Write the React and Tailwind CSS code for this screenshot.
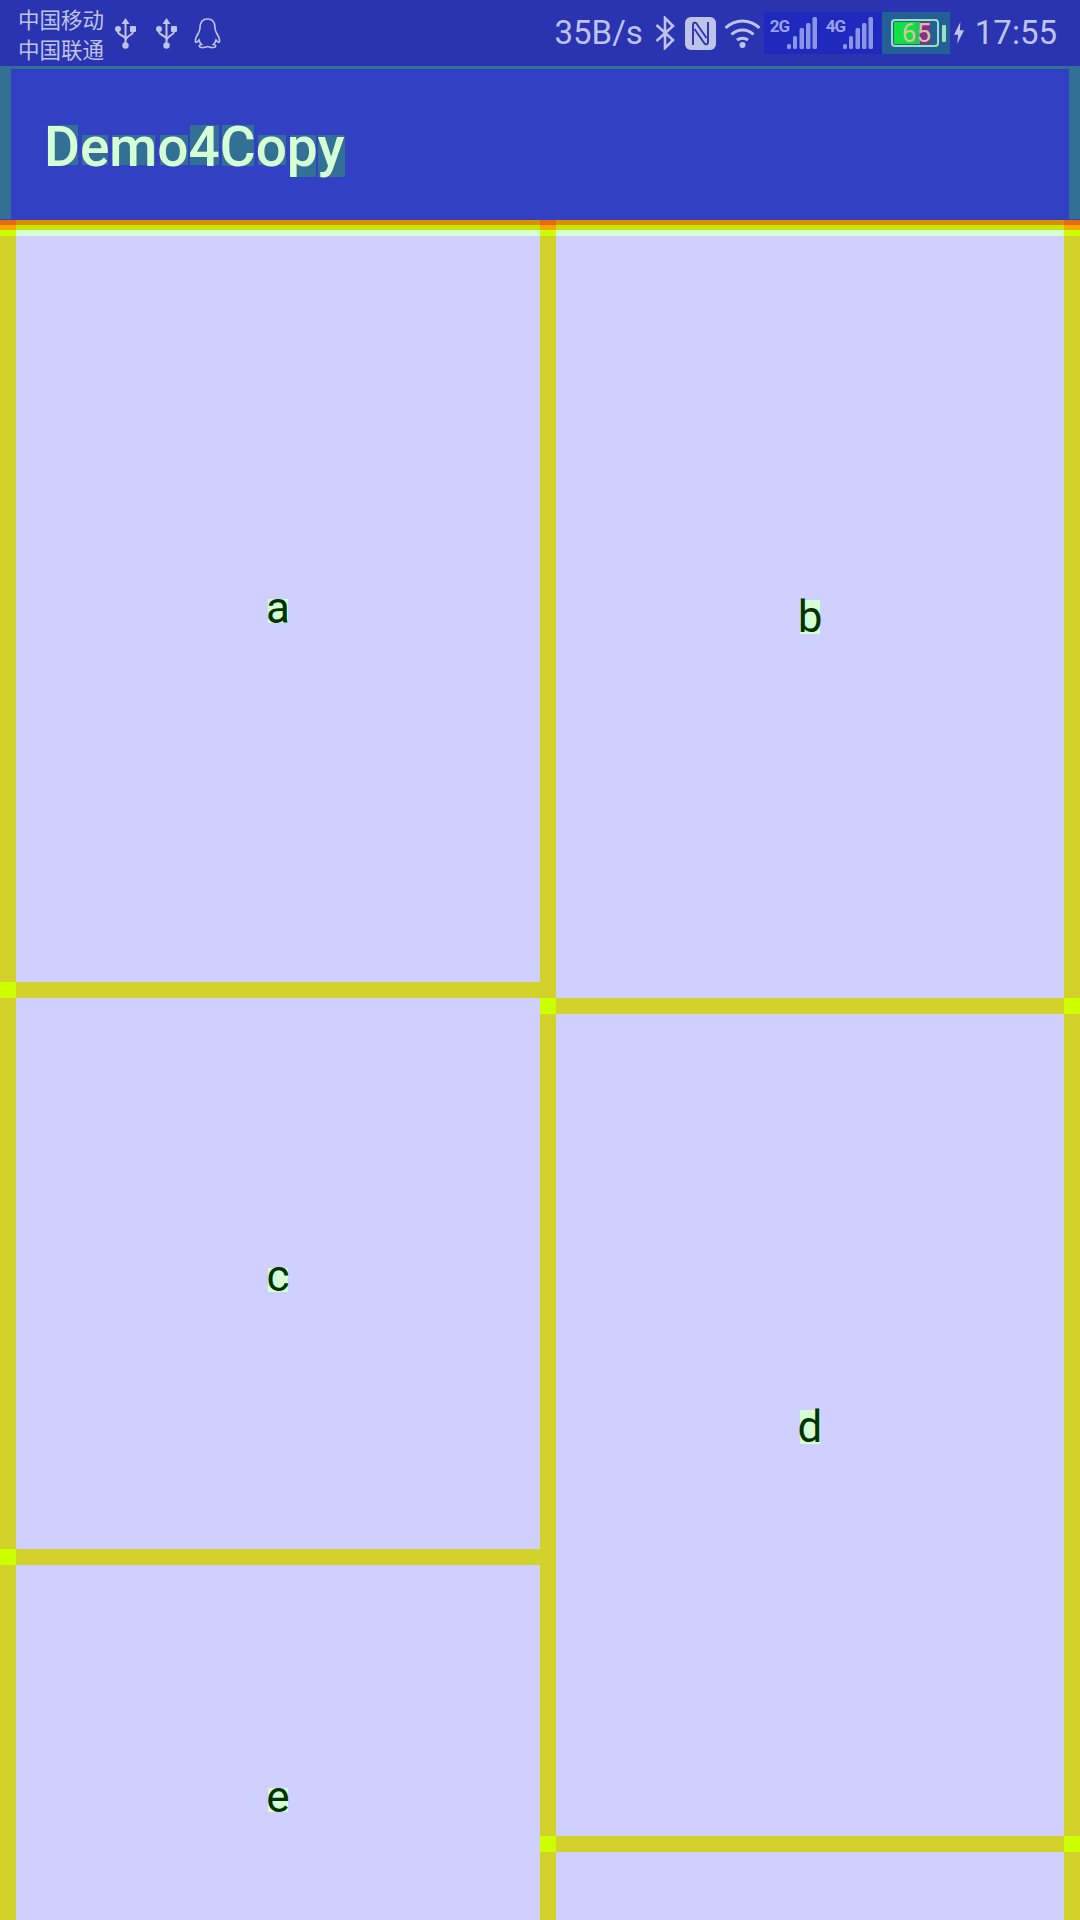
import React from "react";

const UsbIcon = () => (
  <svg width="21" height="31" viewBox="0 0 21 31" fill="none" className="shrink-0">
    <path d="M10.5 0L6.5 6H14.5Z" fill="#bec3ea" />
    <path d="M10.5 5V27M3 11V14C3 17 10.5 18 10.5 21M18 11V14C18 17 10.5 18 10.5 23" stroke="#bec3ea" strokeWidth="2" />
    <circle cx="10.5" cy="27.5" r="3.2" fill="#bec3ea" />
    <circle cx="3" cy="11" r="3" fill="#bec3ea" />
    <rect x="15" y="8" width="6" height="6" rx="1" fill="#bec3ea" />
  </svg>
);

const QqIcon = () => (
  <svg width="27" height="31" viewBox="0 0 27 31" fill="none" className="shrink-0">
    <path
      d="M13.5 1C8 1 6 5 6 10C6 12 5.5 13 4.5 15C2.5 18 1 21 1.5 24C2 25 3.5 24 5 22C5.5 24 6 25.5 7.5 26.5C5.5 27 4.5 28 6 29C8 30 11 29.5 13.5 28.5C16 29.5 19 30 21 29C22.5 28 21.5 27 19.5 26.5C21 25.5 21.5 24 22 22C23.5 24 25 25 25.5 24C26 21 24.5 18 22.5 15C21.5 13 21 12 21 10C21 5 19 1 13.5 1Z"
      stroke="#bec3ea"
      strokeWidth="1.6"
    />
  </svg>
);

const BluetoothIcon = () => (
  <svg width="20" height="34" viewBox="0 0 20 34" fill="none" className="shrink-0">
    <path d="M1.5 9L18 24L10 32V2L18 10L1.5 25" stroke="#bec3ea" strokeWidth="2.6" />
  </svg>
);

const NfcIcon = () => (
  <svg width="31" height="33" viewBox="0 0 31 33" fill="none" className="shrink-0">
    <rect width="31" height="33" rx="6" fill="#bec3ea" />
    <path d="M8 28V8C8 5.5 10 5 11.5 6.5L21.5 21" stroke="#2a33b0" strokeWidth="1.9" />
    <path d="M23 5V25C23 27.5 21 28 19.5 26.5L9.5 12" stroke="#2a33b0" strokeWidth="1.9" />
  </svg>
);

const WifiIcon = () => (
  <svg width="37" height="30" viewBox="0 0 37 30" fill="none" className="shrink-0">
    <path d="M1.5 10C11 0.5 26 0.5 35.5 10M7.5 16.5C14 10.5 23 10.5 29.5 16.5M13 22C16 19.5 21 19.5 24 22" stroke="#bec3ea" strokeWidth="3" />
    <circle cx="18.5" cy="27" r="3" fill="#bec3ea" />
  </svg>
);

const SignalBars = () => (
  <svg width="30" height="32" viewBox="0 0 30 32" fill="#8c94e8" className="shrink-0">
    <rect x="0" y="27" width="4" height="5" rx="1.5" />
    <rect x="6" y="19" width="4" height="13" rx="1.5" />
    <rect x="12.5" y="11" width="4.5" height="21" rx="1.5" />
    <rect x="19" y="6" width="4.5" height="26" rx="1.5" />
    <rect x="25.5" y="0" width="4.5" height="32" rx="1.5" />
  </svg>
);

const Bolt = () => (
  <svg width="10" height="24" viewBox="0 0 11 24" fill="#bec3ea" className="shrink-0">
    <path d="M7 0L0 14H4.5L3.5 24L11 9H6.5Z" />
  </svg>
);

const Signal = ({ label }) => (
  <div className="flex w-[58px] h-[42px] items-end pb-[5px]">
    <span className="w-[17px] self-start mt-[5px] text-[17px] leading-[18px] font-bold text-[#9aa1ec] tracking-[-1px]">
      {label}
    </span>
    <SignalBars />
  </div>
);

const Battery = () => (
  <div className="flex items-center w-[68px] h-[42px] bg-[#236095] pl-[9px]">
    <div className="relative w-[48px] h-[28px] border-2 border-[#a0dcc0] rounded-[4px] p-[1px] flex">
      <div className="w-[21px] bg-[#10e040]" />
      <div className="w-[5px] bg-[#2fc060]" />
      <div className="w-[10px] bg-[#8a2c8c]" />
      <span className="absolute left-[9px] top-0 text-[26px] leading-[24px] text-[#d2c6a0]">65</span>
    </div>
    <div className="ml-[3px] w-[4px] h-[17px] bg-[#a0dcc0] rounded-[1px]" />
  </div>
);

const StatusBar = () => (
  <div className="flex items-center justify-between h-[66px] bg-[#2a33b0] pl-[18px] pr-[23px] text-[#bec3ea]">
    <div className="flex items-center">
      <div className="pt-[2px] text-[21.5px] leading-[30px] font-['Noto_Sans_CJK_SC',sans-serif]">
        <p>中国移动</p>
        <p>中国联通</p>
      </div>
      <div className="flex items-center gap-[20px] ml-[11px]">
        <UsbIcon />
        <UsbIcon />
      </div>
      <div className="ml-[17px]">
        <QqIcon />
      </div>
    </div>
    <div className="flex items-center">
      <span className="text-[33px] leading-[40px]">35B/s</span>
      <div className="ml-[12px]">
        <BluetoothIcon />
      </div>
      <div className="ml-[10px]">
        <NfcIcon />
      </div>
      <div className="ml-[8px]">
        <WifiIcon />
      </div>
      <div className="flex ml-[3px] w-[118px] h-[42px] bg-[#2029bd] pl-[6px]">
        <Signal label="2G" />
        <Signal label="4G" />
      </div>
      <Battery />
      <div className="ml-[4px]">
        <Bolt />
      </div>
      <span className="ml-[11px] text-[33px] leading-[40px]">17:55</span>
    </div>
  </div>
);

const Toolbar = () => (
  <div className="pt-[3px] px-[11px] h-[153px] bg-[#327095]">
    <div className="flex items-center h-[150px] bg-[#3241c3] pl-[33px]">
      <div className="relative w-[310px] h-[60px]">
        <span className="absolute left-[4px] top-[11px] w-[30px] h-[40px] bg-[#327095]" />
        <span className="absolute left-[38px] top-[21px] w-[26px] h-[30px] bg-[#327095]" />
        <span className="absolute left-[68px] top-[21px] w-[43px] h-[30px] bg-[#327095]" />
        <span className="absolute left-[116px] top-[21px] w-[28px] h-[30px] bg-[#327095]" />
        <span className="absolute left-[146px] top-[11px] w-[29px] h-[40px] bg-[#327095]" />
        <span className="absolute left-[178px] top-[11px] w-[32px] h-[41px] bg-[#327095]" />
        <span className="absolute left-[214px] top-[21px] w-[28px] h-[30px] bg-[#327095]" />
        <span className="absolute left-[246px] top-[21px] w-[26px] h-[42px] bg-[#327095]" />
        <span className="absolute left-[274px] top-[21px] w-[27px] h-[42px] bg-[#327095]" />
        <span className="relative block pt-[3px] text-[55px] leading-[60px] font-medium text-[#d5ffd5]">Demo4Copy</span>
      </div>
    </div>
  </div>
);

// overdraw bands under the toolbar
const Band = ({ gutter, fill, height }) => (
  <div className={`flex ${height}`}>
    <div className={`w-[16px] ${gutter}`} />
    <div className={`w-[524px] ${fill}`} />
    <div className={`w-[16px] ${gutter}`} />
    <div className={`w-[508px] ${fill}`} />
    <div className={`w-[16px] ${gutter}`} />
  </div>
);

const Cell = ({ className, children }) => (
  <div className={`flex items-center justify-center shrink-0 bg-[#d0d0ff] ${className}`}>{children}</div>
);

const Letter = ({ box, children }) => (
  <span className={`flex justify-center items-center bg-[#d5ffd5] text-[44px] text-[#003300] ${box}`}>{children}</span>
);

const Divider = ({ width, end }) => (
  <div className="flex h-[16px] shrink-0">
    <div className="w-[16px] bg-[#ccff00]" />
    <div className={`${width} bg-[#d2d22a]`} />
    {end && <div className="w-[16px] bg-[#ccff00]" />}
  </div>
);

const LeftColumn = () => (
  <div className="flex w-[540px]">
    <div className="flex flex-col w-full">
      <div className="flex">
        <div className="w-[16px] bg-[#d2d22a]" />
        <Cell className="w-[524px] h-[746px]">
          <Letter box="w-[20px] h-[24px] pb-[7px] leading-[24px] mt-[4px]">a</Letter>
        </Cell>
      </div>
      <Divider width="w-[524px]" />
      <div className="flex">
        <div className="w-[16px] bg-[#d2d22a]" />
        <Cell className="w-[524px] h-[551px]">
          <Letter box="w-[20px] h-[24px] pb-[7px] leading-[24px] mt-[12px]">c</Letter>
        </Cell>
      </div>
      <Divider width="w-[524px]" />
      <div className="flex">
        <div className="w-[16px] bg-[#d2d22a]" />
        <Cell className="w-[524px] h-[466px]">
          <Letter box="w-[20px] h-[24px] pb-[7px] leading-[24px] mt-[4px]">e</Letter>
        </Cell>
      </div>
    </div>
  </div>
);

const RightColumn = () => (
  <div className="flex flex-col w-[540px]">
    <div className="flex">
      <div className="w-[16px] bg-[#d2d22a]" />
      <Cell className="w-[508px] h-[762px]">
        <Letter box="w-[20px] h-[34px] pb-[1px] leading-[34px]">b</Letter>
      </Cell>
      <div className="w-[16px] bg-[#d2d22a]" />
    </div>
    <Divider width="w-[508px]" end />
    <div className="flex">
      <div className="w-[16px] bg-[#d2d22a]" />
      <Cell className="w-[508px] h-[822px]">
        <Letter box="w-[20px] h-[34px] pb-[1px] leading-[34px] mt-[4px]">d</Letter>
      </Cell>
      <div className="w-[16px] bg-[#d2d22a]" />
    </div>
    <Divider width="w-[508px]" end />
    <div className="flex">
      <div className="w-[16px] bg-[#d2d22a]" />
      <Cell className="w-[508px] h-[300px]" />
      <div className="w-[16px] bg-[#d2d22a]" />
    </div>
  </div>
);

export default function App() {
  return (
    <div className="w-[1080px] h-[1920px] overflow-hidden bg-[#d0d0ff] font-['Roboto',sans-serif]">
      <StatusBar />
      <Toolbar />
      <div className="h-[1px] bg-[#3241c3]" />
      <Band gutter="bg-[#e86a10]" fill="bg-[#d99000]" height="h-[5px]" />
      <Band gutter="bg-[#f5a800]" fill="bg-[#c8e800]" height="h-[5px]" />
      <Band gutter="bg-[#ccff00]" fill="bg-[#d5ffd5]" height="h-[6px]" />
      <div className="flex">
        <LeftColumn />
        <RightColumn />
      </div>
    </div>
  );
}
